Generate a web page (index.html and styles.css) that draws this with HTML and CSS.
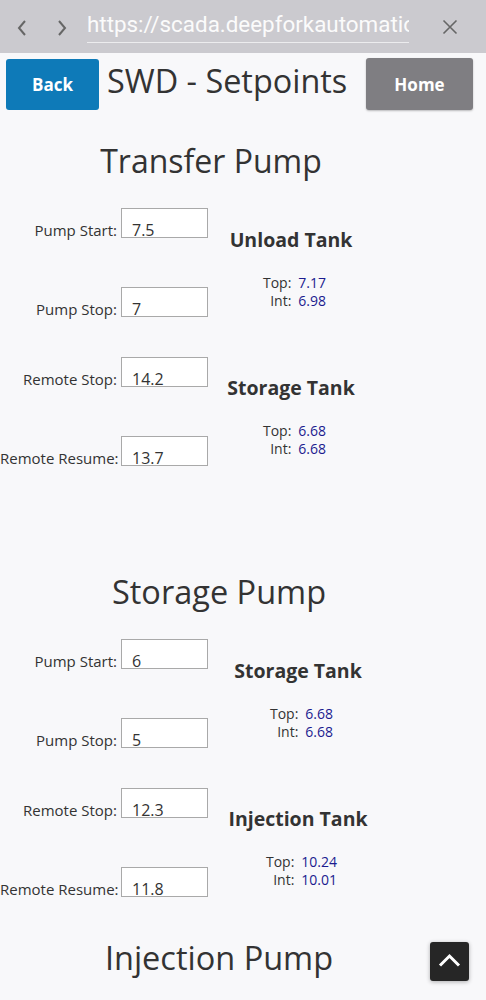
FILE: index.html
```html
<!DOCTYPE html>
<html lang="en">
<head>
<meta charset="utf-8">
<meta name="viewport" content="width=device-width, initial-scale=1">
<title>SWD - Setpoints</title>
<link rel="stylesheet" href="styles.css">
</head>
<body>
<div class="browser-bar">
  <svg class="nav-icon" width="12" height="16" viewBox="0 0 12 16"><polyline points="9,1 3,8 9,15" fill="none" stroke="#666" stroke-width="2"/></svg>
  <svg class="nav-icon nav-icon--fwd" width="12" height="16" viewBox="0 0 12 16"><polyline points="3,1 9,8 3,15" fill="none" stroke="#666" stroke-width="2"/></svg>
  <div class="url"><span class="url-text">https://scada.deepforkautomation.com/swd/setpoints</span></div>
  <svg class="close-icon" width="16" height="16" viewBox="0 0 16 16"><path d="M1.5 1.5 L14.5 14.5 M14.5 1.5 L1.5 14.5" stroke="#666" stroke-width="1.6" fill="none"/></svg>
</div>

<main class="page">
  <header class="top">
    <button class="btn btn--back">Back</button>
    <h1 class="page-title">SWD - Setpoints</h1>
    <button class="btn btn--home">Home</button>
  </header>

  <section class="pump pump--first">
    <h2 class="pump-title">Transfer Pump</h2>
    <div class="pump-body">
      <div class="setpoints">
        <div class="pair">
          <label class="row"><span class="row-label">Pump Start:</span><input class="row-input" type="text" value="7.5" readonly></label>
          <label class="row"><span class="row-label">Pump Stop:</span><input class="row-input" type="text" value="7" readonly></label>
        </div>
        <div class="pair">
          <label class="row"><span class="row-label">Remote Stop:</span><input class="row-input" type="text" value="14.2" readonly></label>
          <label class="row"><span class="row-label">Remote Resume:</span><input class="row-input" type="text" value="13.7" readonly></label>
        </div>
      </div>
      <div class="tanks">
        <div class="tank">
          <h3 class="tank-title">Unload Tank</h3>
          <dl class="levels">
            <dt>Top:</dt><dd>7.17</dd>
            <dt>Int:</dt><dd>6.98</dd>
          </dl>
        </div>
        <div class="tank">
          <h3 class="tank-title">Storage Tank</h3>
          <dl class="levels">
            <dt>Top:</dt><dd>6.68</dd>
            <dt>Int:</dt><dd>6.68</dd>
          </dl>
        </div>
      </div>
    </div>
  </section>

  <section class="pump pump--wide">
    <h2 class="pump-title">Storage Pump</h2>
    <div class="pump-body">
      <div class="setpoints">
        <div class="pair">
          <label class="row"><span class="row-label">Pump Start:</span><input class="row-input" type="text" value="6" readonly></label>
          <label class="row"><span class="row-label">Pump Stop:</span><input class="row-input" type="text" value="5" readonly></label>
        </div>
        <div class="pair">
          <label class="row"><span class="row-label">Remote Stop:</span><input class="row-input" type="text" value="12.3" readonly></label>
          <label class="row"><span class="row-label">Remote Resume:</span><input class="row-input" type="text" value="11.8" readonly></label>
        </div>
      </div>
      <div class="tanks">
        <div class="tank">
          <h3 class="tank-title">Storage Tank</h3>
          <dl class="levels">
            <dt>Top:</dt><dd>6.68</dd>
            <dt>Int:</dt><dd>6.68</dd>
          </dl>
        </div>
        <div class="tank">
          <h3 class="tank-title">Injection Tank</h3>
          <dl class="levels">
            <dt>Top:</dt><dd>10.24</dd>
            <dt>Int:</dt><dd>10.01</dd>
          </dl>
        </div>
      </div>
    </div>
  </section>

  <section class="pump pump--wide">
    <h2 class="pump-title">Injection Pump</h2>
  </section>
</main>

<button class="to-top" aria-label="Back to top">
  <svg width="39" height="39" viewBox="0 0 39 39"><polyline points="10,23.5 19.5,14 29,23.5" fill="none" stroke="#fff" stroke-width="3"/></svg>
</button>
</body>
</html>
```

FILE: styles.css
```css
html, body {
  margin: 0;
  padding: 0;
}

body {
  background: #f8f8fa;
  font-family: "Open Sans", "Noto Sans", sans-serif;
  color: #333;
  overflow: hidden;
}

/* browser chrome */
.browser-bar {
  height: 53px;
  background: #cbcacf;
  display: flex;
  align-items: center;
  box-sizing: border-box;
  padding-left: 16px;
}

.nav-icon {
  display: block;
  margin-top: 2px;
}

.nav-icon--fwd {
  margin-left: 28px;
}

.url {
  width: 322px;
  margin-left: 19px;
  height: 36px;
  border-bottom: 1px solid #ececee;
  overflow: hidden;
  white-space: nowrap;
  text-overflow: clip;
  align-self: flex-start;
  margin-top: 6px;
}

.url-text {
  font-family: Roboto, "Liberation Sans", sans-serif;
  font-size: 22.4px;
  line-height: 36px;
  color: #fbfbfb;
}

.close-icon {
  display: block;
  margin-left: 33px;
}

/* header */
.top {
  display: flex;
  align-items: flex-start;
  height: 57px;
  padding: 0 13px 0 6px;
}

.btn {
  border: none;
  border-radius: 3px;
  color: #fff;
  font-family: "Open Sans", sans-serif;
  font-weight: 700;
  font-size: 17px;
  padding: 0;
  cursor: pointer;
}

.btn--back {
  width: 93px;
  height: 51px;
  margin-top: 6px;
  background: #0e7ab8;
}

.btn--home {
  width: 107px;
  height: 52px;
  margin-top: 5px;
  margin-left: auto;
  background: #7f7e82;
  box-shadow: 0 1px 2px rgba(0, 0, 0, 0.25);
}

.page-title {
  margin: 5px 0 0 8px;
  font-size: 32.4px;
  font-weight: 400;
  line-height: 44px;
  color: #333;
  white-space: nowrap;
}

/* pump sections */
.pump {
  padding-bottom: 39px;
}

.pump--first {
  padding-bottom: 104px;
}

.pump-title {
  margin: 0;
  width: 422px;
  text-align: center;
  font-size: 32px;
  font-weight: 400;
  line-height: 44px;
  color: #333;
}

.pump--first .pump-title {
  margin-top: 29px;
}

.pump--wide .pump-title {
  width: 438px;
  font-size: 32.5px;
}

.pump-body {
  display: flex;
  align-items: flex-start;
  margin-top: 25px;
}

.setpoints {
  display: flex;
  flex-direction: column;
  gap: 40px;
}

.pair {
  display: flex;
  flex-direction: column;
  gap: 49px;
}

.row {
  display: flex;
  align-items: baseline;
  gap: 4px;
  height: 30px;
}

.row-label {
  width: 117px;
  text-align: right;
  font-size: 15px;
  line-height: 18px;
  color: #333;
  white-space: nowrap;
}

.row-input {
  width: 87px;
  height: 30px;
  flex: none;
  box-sizing: border-box;
  border: 1px solid #a9a9a9;
  border-radius: 0;
  background: #fff;
  padding: 13px 10px 0;
  margin: 0;
  font-family: "Open Sans", sans-serif;
  font-size: 16px;
  line-height: 16px;
  color: #333;
  outline: none;
}

/* tanks */
.tanks {
  width: 166px;
  padding-top: 19px;
  display: flex;
  flex-direction: column;
  gap: 65px;
}

.pump--wide .tanks {
  width: 180px;
}

.tank {
  display: flex;
  flex-direction: column;
  align-items: center;
  gap: 21px;
}

.tank-title {
  margin: 0;
  font-size: 19.5px;
  font-weight: 700;
  line-height: 26px;
  color: #333;
  white-space: nowrap;
}

.levels {
  margin: 0;
  padding-left: 7px;
  display: grid;
  grid-template-columns: auto auto;
  column-gap: 7px;
  font-size: 14px;
  line-height: 18px;
}

.levels dt {
  text-align: right;
  color: #333;
}

.levels dd {
  margin: 0;
  color: #1b1b8f;
}

/* floating back-to-top */
.to-top {
  position: fixed;
  right: 17px;
  bottom: 19px;
  width: 39px;
  height: 39px;
  padding: 0;
  border: none;
  border-radius: 3px;
  background: #262626;
  box-shadow: 0 1px 4px rgba(0, 0, 0, 0.3);
  cursor: pointer;
}

.to-top svg {
  display: block;
}
```
